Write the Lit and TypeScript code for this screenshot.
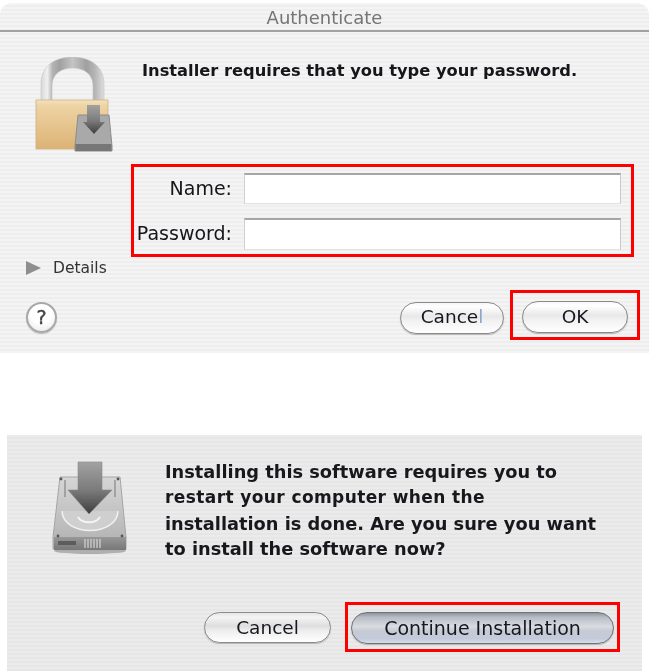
import { LitElement, html, css, svg } from "lit";
import { customElement } from "lit/decorators.js";

const defs = svg`
  <defs>
    <linearGradient id="shackle" x1="0" x2="1" y1="0" y2="0">
      <stop offset="0" stop-color="#d8d8d8"/><stop offset=".1" stop-color="#f0f0f0"/><stop offset=".18" stop-color="#b4b4b4"/>
      <stop offset=".3" stop-color="#a0a0a0"/><stop offset=".5" stop-color="#c4c4c4"/>
      <stop offset=".72" stop-color="#a0a0a0"/><stop offset=".85" stop-color="#b4b4b4"/><stop offset="1" stop-color="#dedede"/>
    </linearGradient>
    <linearGradient id="brass" x1="0" x2="0" y1="0" y2="1">
      <stop offset="0" stop-color="#f5e2bd"/><stop offset=".12" stop-color="#eed3a4"/><stop offset="1" stop-color="#dcb274"/>
    </linearGradient>
    <linearGradient id="arrow" x1="0" x2="0" y1="0" y2="1">
      <stop offset="0" stop-color="#a2a2a2"/><stop offset=".55" stop-color="#7a7a7a"/><stop offset="1" stop-color="#3e3e3e"/>
    </linearGradient>
    <linearGradient id="drive" x1="0" x2="0" y1="0" y2="1">
      <stop offset="0" stop-color="#d6d6d6"/><stop offset="1" stop-color="#b0b0b0"/>
    </linearGradient>
    <linearGradient id="front" x1="0" x2="0" y1="0" y2="1">
      <stop offset="0" stop-color="#989898"/><stop offset="1" stop-color="#777"/>
    </linearGradient>
    <filter id="soft" x="-10%" y="-10%" width="120%" height="120%"><feGaussianBlur stdDeviation=".6"/></filter>
  </defs>`;

/* hard disk with arrow, drawn in page-like coordinates: 50..130 × 460..555 */
const drive = svg`
  <ellipse cx="90" cy="551" rx="36" ry="3" fill="#000" opacity=".25"/>
  <path d="M60 477H120L126 537V549H53V537Z" fill="url(#drive)" stroke="#a5a5a5"/>
  <rect x="54" y="537" width="72" height="13" fill="url(#front)"/>
  <path d="M85 539v9M88 539v9M91 539v9M94 539v9M97 539v9M100 539v9" stroke="#e4e4e4" stroke-width="1"/>
  <rect x="58" y="541" width="18" height="4" fill="#5c5c5c"/>
  <path d="M62 511C63 537 117 537 118 511" fill="#cfcfcf" stroke="#f1f1f1" stroke-width="1.5"/>
  <path d="M78 517C82 524 96 524 100 517" fill="none" stroke="#f4f4f4" stroke-width="2"/>
  <g fill="#555"><circle cx="61" cy="479" r="1.4"/><circle cx="118" cy="479" r="1.4"/><circle cx="58" cy="536" r="1.4"/><circle cx="122" cy="536" r="1.4"/></g>
  <path d="M65 480V497M115 480V497" stroke="#777" stroke-width="1"/>
  <path d="M78 462H102V490H112L89 514L68 490H78Z" fill="url(#arrow)" stroke="#8a8a8a" stroke-width=".6"/>`;

@customElement("app-root")
export class AppRoot extends LitElement {
  static styles = css`
    :host { display: block; width: 649px; height: 671px; background: #fff; overflow: hidden; font-family: "DejaVu Sans", sans-serif; color: #15151a; }
    .auth, .restart { box-sizing: border-box; display: flex; flex-direction: column; }
    .auth { height: 350px; margin-top: 3px; border-radius: 12px 12px 0 0;
      background: repeating-linear-gradient(#f4f4f4 0 2px, #eeeeee 2px 4px); }
    .title { box-sizing: border-box; height: 29px; border-bottom: 2px solid #a2a2a2; display: flex; justify-content: center; align-items: center;
      font-size: 18px; color: #757575; padding-top: 2px; filter: blur(.45px); }
    .top { height: 132px; box-sizing: border-box; padding: 25px 0 0 35px; display: flex; align-items: flex-start; }
    .lock { width: 80px; height: 96px; flex: none; }
    .msg { margin: 4px 0 0 27px; font-size: 16.3px; font-weight: 700; line-height: 20px; filter: blur(.4px); white-space: nowrap; }
    .form { box-sizing: border-box; margin-left: 131px; width: 503px; height: 93px; border: 3px solid #f00; padding: 6px 10px 4px 0;
      display: grid; grid-template-columns: 98px 1fr; grid-template-rows: 31px 32px; column-gap: 12px; row-gap: 14px; align-items: center; }
    label { text-align: right; font-size: 19px; padding-bottom: 2px; filter: blur(.4px); }
    input { box-sizing: border-box; width: 100%; height: 100%; margin: 0; padding: 0; background: #fff; outline: 0;
      border: 1px solid #e2e2e2; border-top: 2px solid #a6a6a6; border-left-color: #d0d0d0; border-right-color: #c8c8c8; border-radius: 0; }
    .details { height: 20px; margin-left: 26px; display: flex; align-items: center; margin-top: 1px; font-size: 15.5px; color: #333; }
    .tri { width: 0; height: 0; border-left: 15px solid #8e8e8e; border-top: 7.5px solid transparent; border-bottom: 7.5px solid transparent; margin-right: 12px; filter: blur(.4px); }
    .details span { filter: blur(.4px); }
    .foot { margin-top: 12px; height: 50px; padding: 0 9px 0 26px; display: flex; align-items: center; }
    .help { width: 31px; height: 31px; margin-top: 4px; box-sizing: border-box; border-radius: 50%; border: 2px solid #a8a8a8; display: flex; align-items: center; justify-content: center;
      background: radial-gradient(circle at 50% 35%, #fff 0 45%, #e4e4e4 100%); box-shadow: 0 1px 1px #bbb; font-size: 19px; color: #444; filter: blur(.35px); -webkit-text-stroke: .4px #444; }
    .spacer { flex: 1; }
    .btn { box-sizing: border-box; height: 32px; border-radius: 16px; border: 1.5px solid #8a8a8a; display: flex; align-items: center; justify-content: center;
      font-size: 18.5px; color: #15181f; box-shadow: 0 1px 1px #b5b5b5;
      background: linear-gradient(#f6f6f6 0, #ffffff 12%, #e8e8e8 45%, #f2f2f2 60%, #ffffff 100%); }
    .btn span { filter: blur(.4px); }
    .foot .btn span { padding-bottom: 2px; }
    .btn i { font-style: normal; color: #8fa6c8; }
    .cancel1 { width: 104px; margin-top: 5px; }
    .hi { box-sizing: border-box; border: 3px solid #f00; }
    .ok-box { width: 130px; height: 50px; margin-left: 6px; padding: 8px 9px 4px; }
    .ok { width: 106px; }
    .restart { width: 635px; height: 236px; margin: 82px 0 0 7px;
      background: repeating-linear-gradient(#ebebeb 0 2px, #e6e6e6 2px 4px); }
    .r-top { height: 167px; box-sizing: border-box; padding: 25px 0 0 43px; display: flex; align-items: flex-start; }
    .hd { width: 80px; height: 95px; flex: none; }
    .r-msg { margin: -1px 0 0 35px; font-weight: 700; font-size: 17.8px; line-height: 25.8px; filter: blur(.45px); white-space: nowrap; color: #17171c; }
    .r-msg div:nth-child(2) { font-size: 17px; letter-spacing: .4px; }
    .r-foot { height: 50px; padding-right: 22px; display: flex; justify-content: flex-end; align-items: flex-start; }
    .cancel2 { width: 127px; height: 31px; margin: 10px 14px 0 0; background: linear-gradient(#e6e6e6 0, #f4f4f4 15%, #dedede 45%, #ededed 60%, #fff 100%); }
    .go-box { width: 275px; height: 50px; padding: 7px 3px 5px; }
    .go { width: 263px; font-size: 19px; border-color: #6f7378; background: linear-gradient(#8f959d 0, #b7bcc4 14%, #d9dce2 45%, #c6cad2 60%, #c3cbdb 85%, #d6dce8 100%); }
  `;

  render() {
    return html`
      <section class="auth">
        <div class="title"><span>Authenticate</span></div>
        <div class="top">
          <svg class="lock" viewBox="35 57 80 96" aria-hidden="true">
            ${defs}
            <g filter="url(#soft)">
              <path d="M41 102V84C41 66 55 57 72.500 57C90 57 104 66 104 84V102H93V86C93 74 84 68 72.500 68C61 68 52 74 52 86V102Z" fill="url(#shackle)" stroke="#c4c4c4" stroke-width=".6"/>
              <rect x="36" y="100" width="72" height="49" fill="url(#brass)" stroke="#cdb083" stroke-width=".8"/>
              <path d="M78 115H109L112 146V151H75V146Z" fill="#a9a9a9" stroke="#8c8c8c"/>
              <rect x="75.500" y="144" width="36" height="7" fill="#777"/>
              <path d="M87 105H100V122H105L94 134L83 122H87Z" fill="url(#arrow)"/>
            </g>
          </svg>
          <div class="msg">Installer requires that you type your password.</div>
        </div>
        <div class="form">
          <label for="n">Name:</label><input id="n" type="text" />
          <label for="p">Password:</label><input id="p" type="password" />
        </div>
        <div class="details"><div class="tri"></div><span>Details</span></div>
        <div class="foot">
          <div class="help">?</div>
          <div class="spacer"></div>
          <div class="btn cancel1"><span>Cance<i>l</i></span></div>
          <div class="hi ok-box"><div class="btn ok"><span>OK</span></div></div>
        </div>
      </section>
      <section class="restart">
        <div class="r-top">
          <svg class="hd" viewBox="50 460 80 95" aria-hidden="true"><g filter="url(#soft)">${drive}</g></svg>
          <div class="r-msg">
            <div>Installing this software requires you to</div>
            <div>restart your computer when the</div>
            <div>installation is done. Are you sure you want</div>
            <div>to install the software now?</div>
          </div>
        </div>
        <div class="r-foot">
          <div class="btn cancel2"><span>Cancel</span></div>
          <div class="hi go-box"><div class="btn go"><span>Continue Installation</span></div></div>
        </div>
      </section>
    `;
  }
}
